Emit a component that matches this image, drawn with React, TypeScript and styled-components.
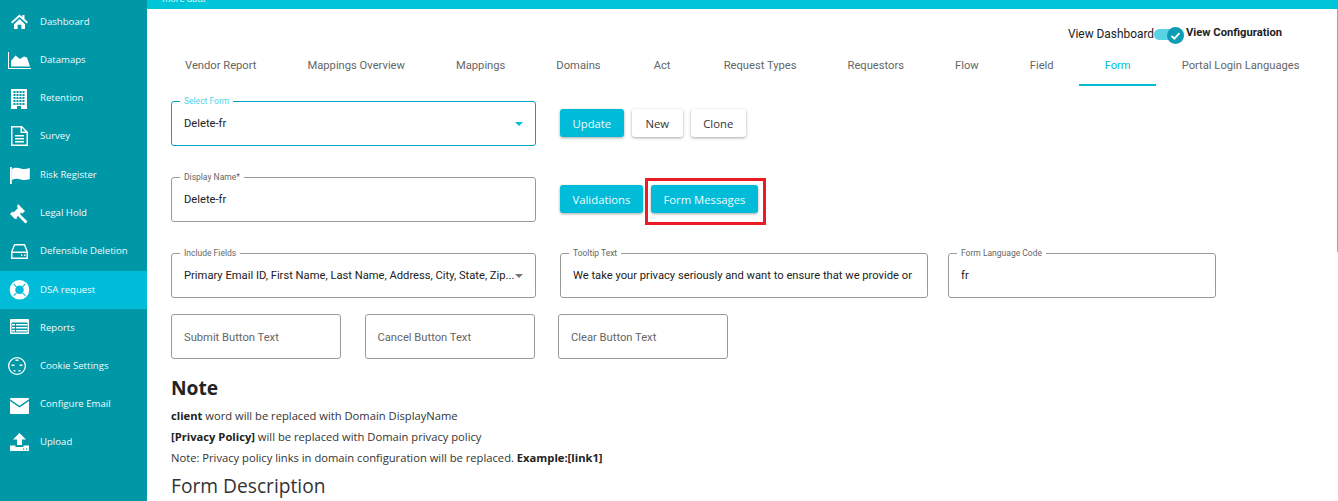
import React from "react";
import styled, { createGlobalStyle } from "styled-components";

const GlobalStyle = createGlobalStyle`
  html, body {
    margin: 0;
    padding: 0;
    height: 501px;
    overflow: hidden;
    background: #fff;
  }
  * {
    box-sizing: border-box;
  }
`;

const Page = styled.div`
  position: relative;
  display: flex;
  height: 501px;
  font-family: "Open Sans", sans-serif;
`;

const ScrollThumb = styled.div`
  position: absolute;
  top: 9px;
  right: 0;
  width: 1px;
  height: 243px;
  background: #4fc3d9;
`;

const Sidebar = styled.nav`
  width: 147px;
  flex-shrink: 0;
  padding-top: 2px;
  background: #0097a7;
`;

const NavItem = styled.div<{ $active?: boolean }>`
  display: flex;
  align-items: center;
  gap: 8px;
  height: 38.25px;
  padding-left: 8px;
  font-size: 9.6px;
  font-weight: 400;
  color: #f0fbfc;
  background: ${(p) => (p.$active ? "#00bcd9" : "transparent")};
  margin: ${(p) => (p.$active ? "1px 0 -1px" : "0")};

  svg {
    width: 24px;
    height: 24px;
    flex-shrink: 0;
    fill: #fff;
  }
`;

const Main = styled.main`
  flex: 1;
  min-width: 0;
`;

const TopBar = styled.div`
  height: 9px;
  padding-left: 15px;
  overflow: hidden;
  background: #00c5d9;
  span {
    display: block;
    margin-top: -7px;
    font-size: 9px;
    line-height: 11px;
    color: #e8fbfd;
  }
`;

const ViewSwitch = styled.div`
  display: flex;
  justify-content: flex-end;
  height: 27px;
  margin-top: 14px;
  padding-right: 56px;
  font-family: Roboto, sans-serif;
  color: #222;
`;

const ViewLabel = styled.span`
  margin-top: 4px;
  font-size: 11.9px;
  line-height: 14px;
`;

const ViewLabelBold = styled.span`
  margin: 3px 0 0 2px;
  font-size: 11.2px;
  font-weight: 700;
  line-height: 14px;
`;

const Toggle = styled.span`
  position: relative;
  width: 30px;
  height: 11px;
  margin-top: 6px;
  border-radius: 6px;
  background: #58d3e6;

  svg {
    position: absolute;
    right: 0;
    top: -2px;
    width: 17px;
    height: 17px;
  }
`;

const Tabs = styled.div`
  display: flex;
  height: 36px;
  margin-left: 12.5px;
  font-family: Roboto, sans-serif;
`;

const Tab = styled.div<{ $active?: boolean }>`
  min-width: 72px;
  padding: 6px 25.5px 0;
  font-size: 11.2px;
  line-height: 20px;
  text-align: center;
  white-space: nowrap;
  color: ${(p) => (p.$active ? "#00bcd4" : "#666")};
  border-bottom: 2px solid ${(p) => (p.$active ? "#00bcd4" : "transparent")};
`;

const FormArea = styled.div`
  display: flex;
  flex-direction: column;
  margin-top: 15px;
  padding-left: 24px;
`;

const Row = styled.div<{ $gap: number; $after: number }>`
  display: flex;
  align-items: center;
  gap: ${(p) => p.$gap}px;
  margin-bottom: ${(p) => p.$after}px;
`;

const Field = styled.fieldset<{ $w: number; $focus?: boolean; $pull?: number }>`
  position: relative;
  flex-shrink: 0;
  display: flex;
  align-items: center;
  justify-content: space-between;
  width: ${(p) => p.$w}px;
  height: 45px;
  margin: 0 0 0 ${(p) => p.$pull || 0}px;
  padding: 0 12px;
  border: 1px solid ${(p) => (p.$focus ? "#00a5c4" : "#9a9a9a")};
  border-radius: 3px;
  font-family: Roboto, sans-serif;
  font-size: 11.2px;
  color: #222;
  min-width: 0;
`;

const Legend = styled.legend<{ $focus?: boolean }>`
  position: absolute;
  top: -5px;
  left: 8px;
  padding: 0 4px;
  background: #fff;
  font-size: 8.5px;
  line-height: 9px;
  color: ${(p) => (p.$focus ? "#4fd3e6" : "#666")};
`;

const FieldText = styled.span<{ $muted?: boolean }>`
  white-space: nowrap;
  margin-top: ${(p) => (p.$muted ? "2px" : "0")};
  color: ${(p) => (p.$muted ? "#666" : "#222")};
`;

const Caret = styled.span<{ $focus?: boolean }>`
  flex-shrink: 0;
  width: 0;
  height: 0;
  border-left: 4px solid transparent;
  border-right: 4px solid transparent;
  border-top: 4px solid ${(p) => (p.$focus ? "#00bcd4" : "#777")};
`;

const Buttons = styled.div`
  display: flex;
  gap: 8px;
  margin-top: -1px;
`;

const Button = styled.button<{ $plain?: boolean }>`
  position: relative;
  min-width: 51px;
  height: 28px;
  padding: 0 12.5px;
  border: 0;
  border-radius: 3px;
  font-family: "Open Sans", sans-serif;
  font-size: 11.3px;
  font-weight: 500;
  color: ${(p) => (p.$plain ? "#333" : "#eefcfd")};
  background: ${(p) => (p.$plain ? "#fff" : "#00bcd9")};
  box-shadow: 0 1px 3px rgba(0, 0, 0, 0.35);
`;

const Highlight = styled.span`
  position: absolute;
  inset: -7px -8px -12px -6px;
  border: 3px solid #ed1c24;
  pointer-events: none;
`;

const Note = styled.div`
  margin-top: 15px;
  color: #222;
`;

const NoteTitle = styled.h2`
  margin: 0 0 4px;
  font-size: 19.2px;
  line-height: 27px;
  font-weight: 700;
`;

const NoteLine = styled.p`
  margin: 0;
  font-size: 11.2px;
  line-height: 21px;
  color: #333;
  b {
    color: #222;
  }
`;

const SectionTitle = styled.h3`
  margin: 4px 0 0;
  font-size: 19.2px;
  line-height: 27px;
  font-weight: 400;
  color: #333;
`;

const TEAL = "#0097a7";

const icons: Record<string, React.ReactNode> = {
  Dashboard: (
    <svg viewBox="0 0 24 24">
      <path d="M11.5 5.5 3 13l1.2 1.5 7.3-6.5 7.3 6.5L20 13l-3.5-3V6h-2.200v2z" />
      <path d="M6 15.200 11.500 10l5.500 5.200V20h-3.600v-4.200H9.600V20H6z" />
    </svg>
  ),
  Datamaps: (
    <svg viewBox="0 0 24 24">
      <path d="M0 5h1v16h22v1H0z" />
      <path d="M3 19.500V14l4.500-5.500 4.500 3.500 4-2.500 3 1 3 9z" />
    </svg>
  ),
  Retention: (
    <svg viewBox="0 0 24 24">
      <path d="M3 3h16v20H3z" />
      {[5, 8, 11, 14].map((x) =>
        [5, 8, 11, 14, 17].map((y) => <rect key={`${x}-${y}`} x={x + 0.5} y={y} width="2" height="2" fill={TEAL} />)
      )}
      <path d="M9 20h4v3H9z" fill={TEAL} />
    </svg>
  ),
  Survey: (
    <svg viewBox="0 0 24 24">
      <path
        fillRule="evenodd"
        d="M3 2h11l6 6v14H3zM4.500 3.500v17h14V9h-6V3.500zM14 4v3.500h3.500z"
      />
      <path d="M7 11h9v1.500H7zM7 14h9v1.500H7zM7 17h9v1.500H7z" />
    </svg>
  ),
  "Risk Register": (
    <svg viewBox="0 0 24 24">
      <path d="M2 5h1.800v17H2z" />
      <path d="M3.800 7c3-2 6-1.500 9-.5 3 1 6 .5 9-.5v11c-3 1-6 1.500-9 .5s-6-1-9 .5z" />
    </svg>
  ),
  "Legal Hold": (
    <svg viewBox="0 0 24 24">
      <path d="M10 4l7 7-2.500 2.500-1-1-1.500 1.500 7.500 7.500-2 2-7.500-7.500-1.500 1.500 1 1L7 19l-5-5 2.500-2.500 1 1L10 8 9 7z" />
    </svg>
  ),
  "Defensible Deletion": (
    <svg viewBox="0 0 24 24">
      <path
        fillRule="evenodd"
        d="M6 5h11l3 8v7H3v-7zM7 6.500l-2.500 6h14L16 6.500zM4.500 14v4.500h14V14z"
      />
      <path d="M13 15.500h1.500V17H13zM16 15.500h1.500V17H16z" />
    </svg>
  ),
  "DSA request": (
    <svg viewBox="0 0 24 24">
      <path
        fillRule="evenodd"
        d="M11.500 2a9.800 9.800 0 1 0 0 19.600 9.800 9.800 0 0 0 0-19.600zM11.500 7.500a4.300 4.300 0 1 1 0 8.600 4.300 4.300 0 0 1 0-8.600z"
      />
      <path
        d="M5.600 5.900l2.900 2.900M17.400 5.900l-2.900 2.900M5.600 17.700l2.900-2.900M17.400 17.700l-2.900-2.900"
        stroke="#00bcd9"
        strokeWidth="1.100"
      />
    </svg>
  ),
  Reports: (
    <svg viewBox="0 0 24 24">
      <rect x="2" y="4" width="19" height="15" rx="1" />
      <path d="M3.500 7.500h16v10h-16z" fill={TEAL} />
      <path d="M4 9h3v1.500H4zM8 9h11v1.500H8zM4 12h3v1.500H4zM8 12h11v1.500H8zM4 15h3v1.500H4zM8 15h11v1.500H8z" />
    </svg>
  ),
  "Cookie Settings": (
    <svg viewBox="0 0 24 24">
      <path fillRule="evenodd" d="M9 4a9 9 0 1 0 0 18 9 9 0 0 0 0-18zM9 5.300a7.700 7.700 0 1 1 0 15.400 7.700 7.700 0 0 1 0-15.400z" />
      <path d="M7.500 6.500h3V8h-3zM3.500 11.500h3V13h-3zM11.500 11.500h3V13h-3zM5.500 17h2v1.500h-2zM10.500 17h2v1.500h-2z" />
    </svg>
  ),
  "Configure Email": (
    <svg viewBox="0 0 24 24">
      <path d="M3 6h17.500c.3 0 .5.200.5.500v.8l-9.500 6.500L2 7.300v-.3C2 6.400 2.400 6 3 6z" />
      <path d="M2 9l9.500 6.500L21 9v12c0 .6-.4 1-1 1H3c-.6 0-1-.4-1-1z" />
    </svg>
  ),
  Upload: (
    <svg viewBox="0 0 24 24">
      <path d="M11.500 3 18 9.500h-4V15H9V9.500H5z" />
      <path d="M2 15.500h5.500V17h8v-1.500H21V21H2z" />
      <path d="M15 18.500h1.200v1.200H15zM18 18.500h1.200v1.200H18z" fill={TEAL} />
    </svg>
  ),
};

const navItems = Object.keys(icons);

const tabs = [
  "Vendor Report",
  "Mappings Overview",
  "Mappings",
  "Domains",
  "Act",
  "Request Types",
  "Requestors",
  "Flow",
  "Field",
  "Form",
  "Portal Login Languages",
];

function App() {
  return (
    <Page>
      <GlobalStyle />
      <Sidebar>
        {navItems.map((name) => (
          <NavItem key={name} $active={name === "DSA request"}>
            {icons[name]}
            {name}
          </NavItem>
        ))}
      </Sidebar>
      <Main>
        <TopBar>
          <span>more data</span>
        </TopBar>
        <ViewSwitch>
          <ViewLabel>View Dashboard</ViewLabel>
          <Toggle>
            <svg viewBox="0 0 17 17">
              <circle cx="8.500" cy="8.500" r="8.500" fill="#0e9db5" />
              <path d="M4.500 8.800l2.800 2.800 5.200-5.400" fill="none" stroke="#fff" strokeWidth="1.800" />
            </svg>
          </Toggle>
          <ViewLabelBold>View Configuration</ViewLabelBold>
        </ViewSwitch>
        <Tabs>
          {tabs.map((t) => (
            <Tab key={t} $active={t === "Form"}>
              {t}
            </Tab>
          ))}
        </Tabs>
        <FormArea>
          <Row $gap={24} $after={31}>
            <Field $w={365} $focus>
              <Legend $focus>Select Form</Legend>
              <FieldText>Delete-fr</FieldText>
              <Caret $focus />
            </Field>
            <Buttons>
              <Button>Update</Button>
              <Button $plain>New</Button>
              <Button $plain>Clone</Button>
            </Buttons>
          </Row>
          <Row $gap={24} $after={31}>
            <Field $w={365}>
              <Legend>Display Name*</Legend>
              <FieldText>Delete-fr</FieldText>
            </Field>
            <Buttons>
              <Button>Validations</Button>
              <Button>
                Form Messages
                <Highlight />
              </Button>
            </Buttons>
          </Row>
          <Row $gap={24} $after={16}>
            <Field $w={365}>
              <Legend>Include Fields</Legend>
              <FieldText>Primary Email ID, First Name, Last Name, Address, City, State, Zip...</FieldText>
              <Caret />
            </Field>
            <Field $w={368}>
              <Legend>Tooltip Text</Legend>
              <FieldText>We take your privacy seriously and want to ensure that we provide or</FieldText>
            </Field>
            <Field $w={268} $pull={-4}>
              <Legend>Form Language Code</Legend>
              <FieldText>fr</FieldText>
            </Field>
          </Row>
          <Row $gap={23.5} $after={0}>
            <Field $w={170}>
              <FieldText $muted>Submit Button Text</FieldText>
            </Field>
            <Field $w={170}>
              <FieldText $muted>Cancel Button Text</FieldText>
            </Field>
            <Field $w={170}>
              <FieldText $muted>Clear Button Text</FieldText>
            </Field>
          </Row>
          <Note>
            <NoteTitle>Note</NoteTitle>
            <NoteLine>
              <b>client</b> word will be replaced with Domain DisplayName
            </NoteLine>
            <NoteLine>
              <b>[Privacy Policy]</b> will be replaced with Domain privacy policy
            </NoteLine>
            <NoteLine>
              Note: Privacy policy links in domain configuration will be replaced. <b>Example:[link1]</b>
            </NoteLine>
            <SectionTitle>Form Description</SectionTitle>
          </Note>
        </FormArea>
      </Main>
      <ScrollThumb />
    </Page>
  );
}

export default App;
